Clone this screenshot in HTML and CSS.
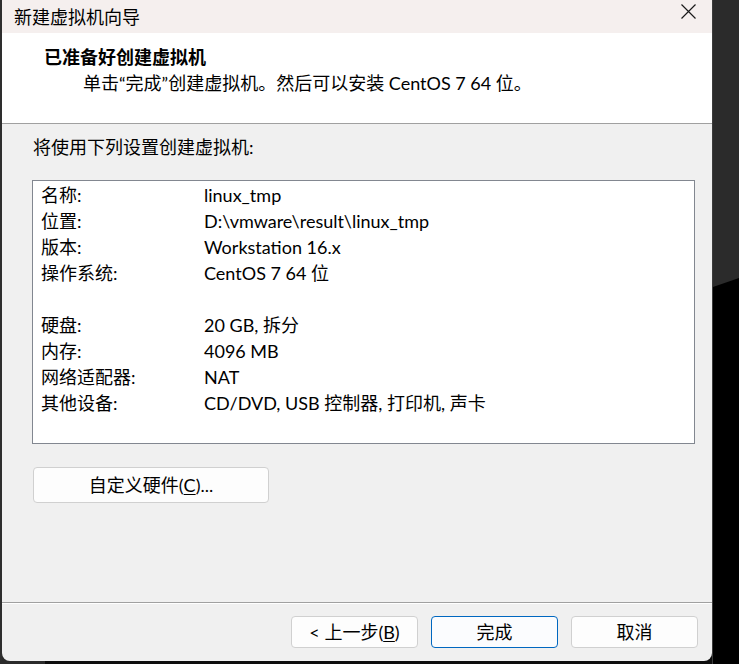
FILE: index.html
```html
<!DOCTYPE html>
<html lang="zh-CN">
<head>
<meta charset="utf-8">
<title>新建虚拟机向导</title>
<link rel="stylesheet" href="styles.css">
</head>
<body>
<div class="screen">
  <div class="edge-left"></div>
  <div class="window">
    <div class="titlebar">
      <span class="title">新建虚拟机向导</span>
      <span class="close" aria-label="关闭">
        <svg width="15" height="15" viewBox="0 0 15 15"><path d="M0.5 0.5 L14.5 14.5 M14.5 0.5 L0.5 14.5" stroke="#1a1a1a" stroke-width="1.2" fill="none"/></svg>
      </span>
    </div>
    <div class="header">
      <div class="h-title">已准备好创建虚拟机</div>
      <div class="h-sub">单击<span class="q">“</span>完成<span class="q">”</span>创建虚拟机。然后可以安装 CentOS 7 64 位。</div>
    </div>
    <div class="content">
      <p class="intro">将使用下列设置创建虚拟机:</p>
      <div class="summary">
        <div class="row"><span class="k">名称:</span><span class="v">linux_tmp</span></div>
        <div class="row"><span class="k">位置:</span><span class="v">D:\vmware\result\linux_tmp</span></div>
        <div class="row"><span class="k">版本:</span><span class="v">Workstation 16.x</span></div>
        <div class="row"><span class="k">操作系统:</span><span class="v">CentOS 7 64 位</span></div>
        <div class="row"></div>
        <div class="row"><span class="k">硬盘:</span><span class="v">20 GB, 拆分</span></div>
        <div class="row"><span class="k">内存:</span><span class="v">4096 MB</span></div>
        <div class="row"><span class="k">网络适配器:</span><span class="v">NAT</span></div>
        <div class="row"><span class="k">其他设备:</span><span class="v">CD/DVD, USB 控制器, 打印机, 声卡</span></div>
      </div>
      <div class="custom-wrap"><span class="btn custom">自定义硬件(<u>C</u>)...</span></div>
    </div>
    <div class="footer">
      <span class="btn">&lt; 上一步(<u>B</u>)</span>
      <span class="btn primary">完成</span>
      <span class="btn">取消</span>
    </div>
  </div>
  <div class="edge-right"><div class="shade"></div></div>
</div>
</body>
</html>
```
FILE: styles.css
```css
* { box-sizing: border-box; }
html, body { margin: 0; padding: 0; }
body {
  width: 739px;
  height: 664px;
  overflow: hidden;
  background: #0d0d0d;
  font-family: Lato, "Noto Sans CJK SC", sans-serif;
  font-size: 18px;
  color: #000;
}
.screen {
  display: flex;
  width: 739px;
  height: 664px;
  background: linear-gradient(90deg, #2b2b2b 0 45px, #0d0d0d 45px);
}
.edge-left {
  width: 2px;
  height: 661px;
  background: #2e2e2e;
  flex: none;
}
.window {
  width: 710px;
  height: 661px;
  flex: none;
  display: flex;
  flex-direction: column;
  background: #f0f0f0;
  border-radius: 0 0 8px 8px;
  overflow: hidden;
}
.titlebar {
  height: 33px;
  flex: none;
  background: #f5efee;
  display: flex;
  align-items: center;
  justify-content: space-between;
  padding: 0 16px 0 12px;
}
.title {
  font-family: "Noto Sans CJK SC", sans-serif;
  font-size: 18px;
  line-height: 33px;
  margin-top: -1px;
}
.close {
  display: flex;
  width: 15px;
  height: 15px;
  margin-top: -10px;
}
.header {
  height: 91px;
  flex: none;
  background: #fff;
  border-bottom: 1px solid #a0a0a0;
  padding: 10px 0 0 42px;
}
.h-title {
  font-family: "Noto Sans CJK SC", sans-serif;
  font-weight: bold;
  line-height: 26px;
}
.h-sub {
  line-height: 26px;
  margin-top: 1px;
  padding-left: 39px;
}
.content {
  flex: 1;
  padding: 10px 0 0 31px;
}
.intro {
  margin: 0;
  line-height: 26px;
}
.summary {
  margin-top: 20px;
  width: 663px;
  height: 264px;
  background: #fff;
  border: 1px solid #828790;
  padding: 1px 0 0 8px;
  margin-left: -1px;
}
.row {
  display: flex;
  height: 26px;
  line-height: 26px;
}
.k { width: 163px; flex: none; }
.custom-wrap {
  margin-top: 23px;
  display: flex;
}
.btn {
  display: inline-flex;
  align-items: center;
  justify-content: center;
  background: #fdfdfd;
  border: 1px solid #d0d0d0;
  border-radius: 4px;
  font-size: 18px;
  line-height: 20px;
}
.btn u { text-underline-offset: 2px; }
.custom {
  width: 236px;
  height: 36px;
}
.footer {
  height: 59px;
  flex: none;
  border-top: 1px solid #a0a0a0;
  box-shadow: inset 0 1px 0 #ffffff;
  display: flex;
  justify-content: flex-end;
  gap: 13px;
  padding: 13px 14px 0 0;
}
.footer .btn {
  width: 127px;
  height: 32px;
}
.footer .primary {
  border-color: #0067c0;
  background: #fbfcfe;
}
.edge-right {
  width: 27px;
  height: 664px;
  flex: none;
  background: #2b2b2b;
  border-left: 1px solid #3c3c3c;
}
.shade {
  width: 100%;
  height: 100%;
  background: #000;
  clip-path: polygon(0 287px, 100% 278px, 100% 100%, 0 100%);
}
```
